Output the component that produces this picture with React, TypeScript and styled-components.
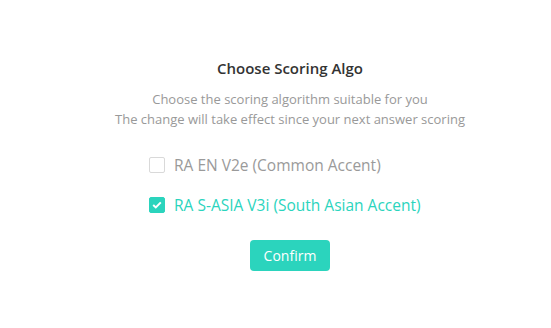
import React, { useState } from "react";
import styled, { createGlobalStyle } from "styled-components";

const Global = createGlobalStyle`
  html, body { margin: 0; padding: 0; background: #fff; }
  body { font-family: "Open Sans", "Noto Sans", sans-serif; }
`;

const Page = styled.div`
  width: 551px;
  height: 328px;
  display: flex;
  flex-direction: column;
  align-items: center;
  padding: 58px 0 0 29px;
  box-sizing: border-box;
`;

const Title = styled.h2`
  margin: 0;
  font-size: 15px;
  font-weight: 600;
  color: #333;
  line-height: 20px;
`;

const Sub = styled.p`
  margin: 11px 0 0;
  font-size: 13px;
  color: #999;
  line-height: 20px;
  text-align: center;
`;

const Options = styled.div`
  display: flex;
  flex-direction: column;
  align-self: flex-start;
  margin: 25px 0 0 120px;
  gap: 18px;
`;

const Option = styled.label<{ $checked: boolean }>`
  display: flex;
  align-items: center;
  gap: 9px;
  cursor: pointer;
  font-size: 15.5px;
  line-height: 22px;
  color: ${(p) => (p.$checked ? "#2bd4bd" : "#9a9a9a")};
`;

const Box = styled.span<{ $checked: boolean }>`
  width: 16px;
  height: 16px;
  box-sizing: border-box;
  border-radius: 2px;
  border: 1px solid ${(p) => (p.$checked ? "#2bd4bd" : "#d9d9d9")};
  background: ${(p) => (p.$checked ? "#2bd4bd" : "#fff")};
  display: flex;
  align-items: center;
  justify-content: center;
`;

const Button = styled.button`
  margin-top: 24px;
  width: 80px;
  height: 31px;
  border: none;
  border-radius: 4px;
  background: #2bd4bd;
  color: #fff;
  font-family: inherit;
  font-size: 14px;
  cursor: pointer;
`;

const opts = ["RA EN V2e (Common Accent)", "RA S-ASIA V3i (South Asian Accent)"];

export default function App() {
  const [sel, setSel] = useState(1);
  return (
    <>
      <Global />
      <Page>
        <Title>Choose Scoring Algo</Title>
        <Sub>
          Choose the scoring algorithm suitable for you
          <br />
          The change will take effect since your next answer scoring
        </Sub>
        <Options>
          {opts.map((o, i) => (
            <Option key={o} $checked={sel === i} onClick={() => setSel(i)}>
              <Box $checked={sel === i}>
                {sel === i && (
                  <svg width="10" height="8" viewBox="0 0 10 8">
                    <path d="M1.2 4 L3.8 6.4 L8.8 1.4" stroke="#fff" strokeWidth="2" fill="none" />
                  </svg>
                )}
              </Box>
              {o}
            </Option>
          ))}
        </Options>
        <Button>Confirm</Button>
      </Page>
    </>
  );
}
